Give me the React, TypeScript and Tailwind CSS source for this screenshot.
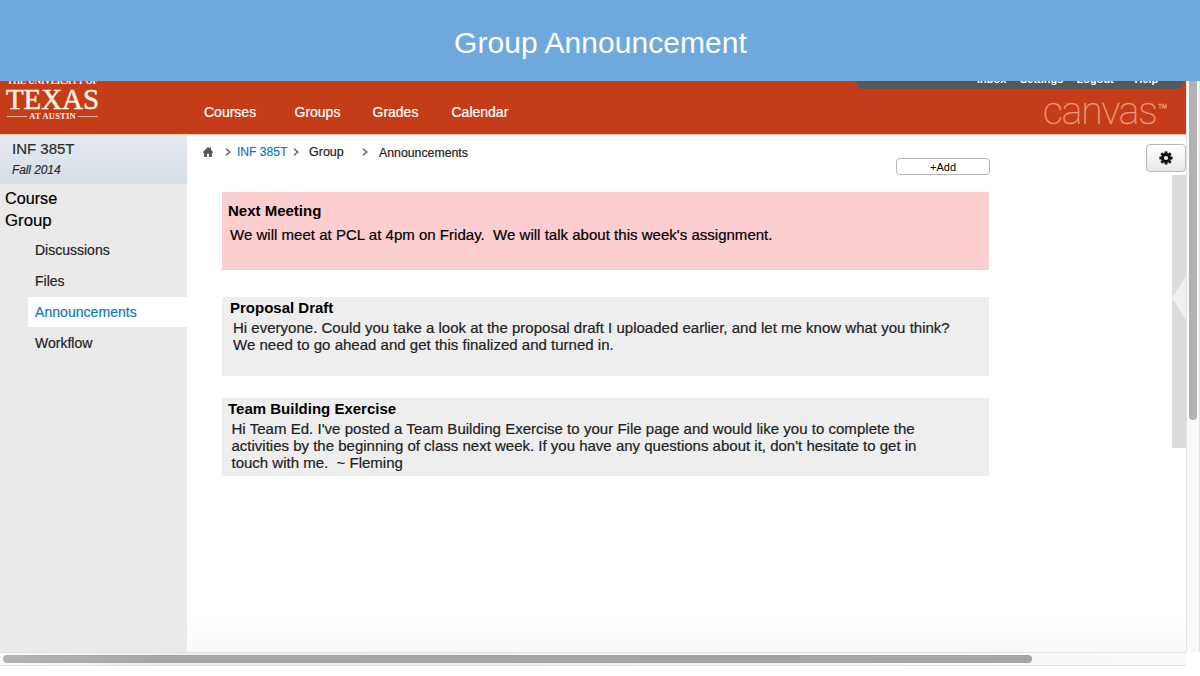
const navItems = [
  { label: "Courses", cls: "w-[90.5px]" },
  { label: "Groups", cls: "w-[78px]" },
  { label: "Grades", cls: "w-[79px]" },
  { label: "Calendar", cls: "" },
];

function TopBar() {
  return (
    <header className="flex h-[54px] justify-between overflow-hidden border-b border-[#f3c4b0] bg-[#c43d18]">
      <div className="flex">
        <div className="flex w-[204px] flex-col pl-[6px] font-['Liberation_Serif',serif] text-[#fdeee4]">
          <div className="-mt-[4px] h-[8px] whitespace-nowrap pl-[1px] text-[9.3px] font-bold leading-[9px] tracking-[-0.25px]">
            THE UNIVERSITY OF
          </div>
          <div className="h-[27px] pt-px text-[29px] leading-[27px] tracking-[-0.1px] [-webkit-text-stroke:0.5px_#fdeee4]">
            TEXAS
          </div>
          <div className="flex w-[92px] items-center gap-[2px] pl-[1px] text-[8.5px] font-bold leading-[9px]">
            <span className="h-px flex-1 bg-[#eeb49c]" />
            <span className="whitespace-nowrap tracking-[0.2px]">AT AUSTIN</span>
            <span className="h-px flex-1 bg-[#eeb49c]" />
          </div>
        </div>
        <nav className="flex pt-[22px] text-[14px] leading-[18px] text-white [-webkit-text-stroke:0.2px_#fff]">
          {navItems.map((n) => (
            <a key={n.label} className={n.cls}>{n.label}</a>
          ))}
        </nav>
      </div>
      <div className="flex w-[330px] flex-col items-end">
        <div className="mr-[3px] flex h-[8px] w-[327px] shrink-0 items-end overflow-hidden rounded-b-[6px] bg-[#585858] pb-[3px] pl-[121px] text-[11px] font-bold leading-[13px] text-white">
          <span className="w-[43px]">Inbox</span>
          <span className="w-[56.5px]">Settings</span>
          <span className="w-[58px]">Logout</span>
          <span>Help</span>
        </div>
        <div className="mr-[18px] mt-[3px] flex whitespace-nowrap font-['Roboto',sans-serif] text-[39px] font-thin leading-[38px] text-[#f3a184] [-webkit-text-stroke:0.3px_#ef9273]">
          <span className="tracking-[-1.1px]">canvas</span>
          <span className="ml-px text-[17px] font-light leading-[36px]">™</span>
        </div>
      </div>
    </header>
  );
}

function Sidebar() {
  return (
    <aside className="w-[187px] shrink-0 bg-[#eaeaea]">
      <div className="h-[49px] bg-linear-to-b from-[#e6ebf2] to-[#d6dde6] pl-[12px] text-[#2d2d2d] [-webkit-text-stroke:0.2px_#2d2d2d]">
        <div className="pt-[5px] text-[15px] leading-[18px]">INF 385T</div>
        <div className="pt-[5px] text-[12px] italic leading-[14px] tracking-[-0.1px]">Fall 2014</div>
      </div>
      <div className="pl-[5px] pt-[3px] text-[16.2px] leading-[22px] text-black [-webkit-text-stroke:0.2px_#000]">
        <div>Course</div>
        <div className="pt-px text-[16.8px]">Group</div>
      </div>
      <ul className="ml-[28px] mt-[3px] text-[14px] leading-[31px] text-[#222] [-webkit-text-stroke:0.2px]">
        <li className="pl-[7px]">Discussions</li>
        <li className="pl-[7px]">Files</li>
        <li className="h-[30px] bg-white pl-[7px] tracking-[0.05px] text-[#1376bb]">Announcements</li>
        <li className="pl-[7px] pt-px">Workflow</li>
      </ul>
    </aside>
  );
}

function Chevron({ className }: { className: string }) {
  return (
    <svg viewBox="0 0 6 8" className={"h-[8px] w-[6px] shrink-0 " + className}>
      <path d="M1 .7 4.8 4 1 7.3" fill="none" stroke="#666" strokeWidth="1.5" />
    </svg>
  );
}

function Breadcrumbs() {
  return (
    <div className="flex h-[20px] items-center text-[12.5px] leading-[20px] text-[#222] [-webkit-text-stroke:0.2px]">
      <svg viewBox="0 0 10 10" className="ml-[16px] h-[10px] w-[10px]" fill="#555" stroke="none">
        <path d="M5 0 6.6 1.5V.6H8v2.2L10 5v.7H8.9V10H6.1V6.7H3.9V10H1.1V5.7H0V5z" />
      </svg>
      <Chevron className="ml-[12px]" />
      <span className="ml-[6px] w-[56px] text-[12.1px] text-[#1376bb]">INF 385T</span>
      <Chevron className="" />
      <span className="ml-[10px] w-[53px]">Group</span>
      <Chevron className="" />
      <span className="ml-[11px] pt-px text-[12.3px]">Announcements</span>
    </div>
  );
}

function Gear() {
  return (
    <svg viewBox="-7 -7 14 14" className="h-[14px] w-[14px]">
      <g fill="#111">
        {[0, 45, 90, 135].map((a) => (
          <rect key={a} x="-1.4" y="-6.6" width="2.8" height="13.2" transform={`rotate(${a})`} />
        ))}
        <circle r="4.9" />
      </g>
      <circle r="2.1" fill="#f4f4f4" />
    </svg>
  );
}

function Announcements() {
  return (
    <div className="ml-[35px] w-[767px] whitespace-pre text-[#222]">
      <section className="h-[78px] bg-[#fdced0] pl-[6px] pt-[10px]">
        <h2 className="text-[15px] font-bold leading-[18px] text-black">Next Meeting</h2>
        <p className="mt-[6px] pl-[2px] text-[15px] leading-[18px] tracking-[0.02px] text-black [-webkit-text-stroke:0.2px]">
          {"We will meet at PCL at 4pm on Friday.  We will talk about this week's assignment."}
        </p>
      </section>
      <section className="mt-[27px] h-[79px] bg-[#eee] pl-[8px] pt-[2px]">
        <h2 className="text-[15px] font-bold leading-[18px] text-black">Proposal Draft</h2>
        <p className="mt-[2px] pl-[3px] text-[15px] leading-[17px] tracking-[0.012px] [-webkit-text-stroke:0.2px]">
          {"Hi everyone. Could you take a look at the proposal draft I uploaded earlier, and let me know what you think?\nWe need to go ahead and get this finalized and turned in."}
        </p>
      </section>
      <section className="mt-[22px] h-[78px] bg-[#eee] pl-[6px] pt-[2px]">
        <h2 className="text-[15px] font-bold leading-[18px] text-black">Team Building Exercise</h2>
        <p className="mt-[2px] pl-[3.5px] text-[15px] leading-[17px] [-webkit-text-stroke:0.2px]">
          <span className="tracking-[0.03px]">{"Hi Team Ed. I've posted a Team Building Exercise to your File page and would like you to complete the"}</span>
          {"\nactivities by the beginning of class next week. If you have any questions about it, don't hesitate to get in\ntouch with me.  ~ Fleming"}
        </p>
      </section>
    </div>
  );
}

export default function App() {
  return (
    <div className="flex h-[676px] w-[1200px] flex-col overflow-hidden bg-white font-['Liberation_Sans',Arial,sans-serif]">
      <div className="flex h-[81px] shrink-0 items-center justify-center bg-[#6fa8dc] pt-[4px] text-[30px] text-white">
        <h1 className="-mt-px pl-px tracking-[0.05px]">Group Announcement</h1>
      </div>
      <div className="flex h-[571px] shrink-0">
        <div className="flex w-[1186px] flex-col">
          <TopBar />
          <div className="flex flex-1">
            <Sidebar />
            <main className="flex flex-1 justify-between bg-linear-to-b from-white from-94% to-[#f8f8f8]">
              <div className="pt-[7px]">
                <div className="flex">
                  <div className="w-[709px]">
                    <Breadcrumbs />
                  </div>
                  <button className="mt-[16px] h-[17px] w-[94px] rounded-[4px] border border-[#b5b5b5] bg-white text-[11px] leading-[16px] text-black">
                    +Add
                  </button>
                </div>
                <div className="mt-[17px]">
                  <Announcements />
                </div>
              </div>
              <div className="flex flex-col items-end pt-[9px]">
                <button className="flex h-[28px] w-[40px] items-center justify-center rounded-[4px] border border-[#bbb] bg-linear-to-b from-white to-[#e8e8e8]">
                  <Gear />
                </button>
                <div className="mt-[3px] flex h-[273px] w-[14px] items-center bg-[#dcdcdc] pb-[27px]">
                  <svg viewBox="0 0 14 44" className="h-[44px] w-[14px]">
                    <path d="M0 22 14 0v44z" fill="#f0f0f0" />
                  </svg>
                </div>
              </div>
            </main>
          </div>
        </div>
        <div className="flex w-[14px] justify-center border-x border-[#e2e2e2] bg-[#f9f9f9]">
          <div className="h-[339px] w-[8px] rounded-b-full bg-[#b1b1b1]" />
        </div>
      </div>
      <div className="flex h-[14px] w-[1186px] shrink-0 items-center border-y border-[#e0e0e0] bg-linear-to-r from-[#fafafa] via-[#ececec] via-15% to-[#fafafa] pl-[3px]">
        <div className="h-[8px] w-[1029px] rounded-full bg-linear-to-r from-[#b4b4b4] to-[#a5a5a5] to-15%" />
      </div>
    </div>
  );
}
